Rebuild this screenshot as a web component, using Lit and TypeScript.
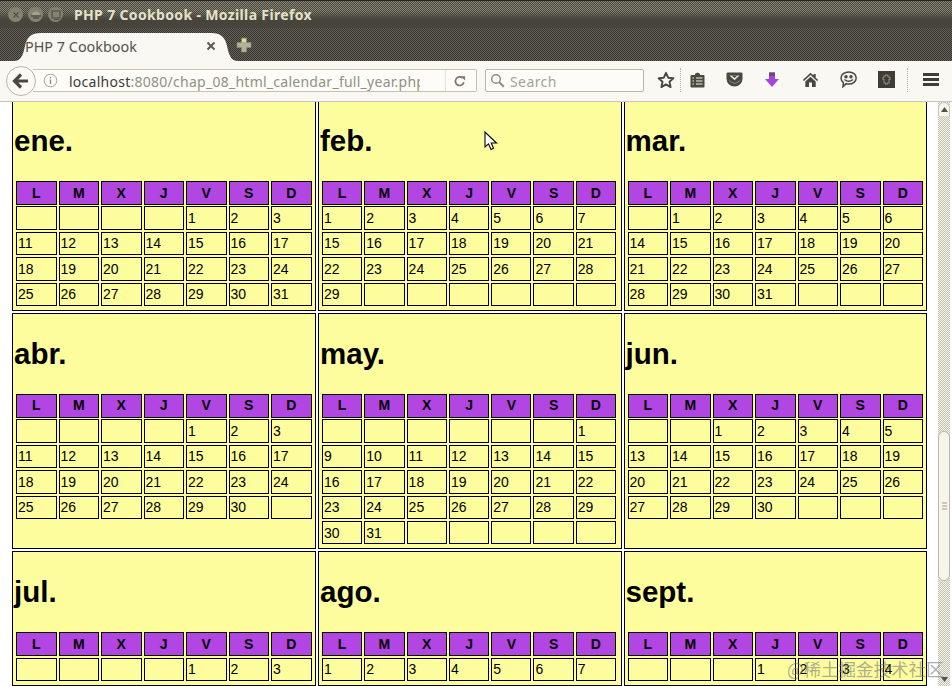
import { LitElement, html, css } from "lit";
import { customElement } from "lit/decorators.js";

const DAYS = ["L", "M", "X", "J", "V", "S", "D"];
const r = (a: number, b: number) => Array.from({ length: b - a + 1 }, (_, i) => String(a + i));
const blanks = (n: number) => Array.from({ length: n }, () => "");
const pad7 = (a: string[]) => a.concat(blanks((7 - (a.length % 7)) % 7));

const MONTHS: { name: string; cells: string[] }[] = [
  { name: "ene.", cells: [...blanks(4), ...r(1, 3), ...r(11, 31)] },
  { name: "feb.", cells: pad7([...r(1, 7), ...r(15, 29)]) },
  { name: "mar.", cells: pad7([...blanks(1), ...r(1, 6), ...r(14, 31)]) },
  { name: "abr.", cells: pad7([...blanks(4), ...r(1, 3), ...r(11, 30)]) },
  { name: "may.", cells: pad7([...blanks(6), "1", ...r(9, 31)]) },
  { name: "jun.", cells: pad7([...blanks(2), ...r(1, 5), ...r(13, 30)]) },
  { name: "jul.", cells: [...blanks(4), ...r(1, 3)] },
  { name: "ago.", cells: r(1, 7) },
  { name: "sept.", cells: [...blanks(3), ...r(1, 4)] },
];

const ink = "#4b483f";

@customElement("app-root")
export class AppRoot extends LitElement {
  static styles = css`
    :host {
      display: flex;
      flex-direction: column;
      position: relative;
      width: 952px;
      height: 686px;
      overflow: hidden;
      background: #fff;
      font-family: "Noto Sans", "Open Sans", sans-serif;
    }
    .titlebar {
      height: 28px;
      flex: none;
      display: flex;
      align-items: center;
      padding: 0 0 0 8px;
      box-sizing: border-box;
      border-top: 1px solid #26251f;
      background:
        linear-gradient(#47443c00 0, #47443c00 10px, #47443cdd 17px, #47443c 19px),
        repeating-conic-gradient(#8a8779 0 25%, #47443c 0 50%) 0 0 / 2px 2px;
    }
    .winbtn {
      width: 15px;
      height: 15px;
      border-radius: 50%;
      background: #85826f;
      margin-right: 5px;
      display: flex;
      align-items: center;
      justify-content: center;
    }
    .winbtn svg { display: block; }
    .wintitle {
      margin-left: 6px;
      font-size: 14px;
      font-weight: 700;
      color: #e4e2ca;
      letter-spacing: 0.35px;
      white-space: nowrap;
      line-height: 28px;
    }
    .tabstrip {
      height: 33px;
      flex: none;
      display: flex;
      align-items: flex-end;
      padding-left: 14px;
      box-sizing: border-box;
      background: repeating-conic-gradient(#66635a 0 25%, #35332d 0 50%) 0 0 / 2px 2px;
    }
    .tab {
      position: relative;
      width: 224px;
      height: 28px;
      display: flex;
      align-items: center;
      padding: 0 22px 2px 11px;
      box-sizing: border-box;
      color: #55524a;
      font-size: 14.4px;
      justify-content: space-between;
    }
    .tabshape {
      position: absolute;
      inset: 0;
      width: 100%;
      height: 100%;
    }
    .tab span, .tab .close { position: relative; }
    .plus { margin: 0 0 8px -2px; display: block; }
    .nav {
      height: 41px;
      flex: none;
      display: flex;
      align-items: center;
      box-sizing: border-box;
      padding: 0 0 1px 6px;
      background: #f9f8f3;
      border-bottom: 1px solid #c6c5bb;
    }
    .back {
      width: 30px;
      height: 30px;
      flex: none;
      margin-right: -3px;
      border-radius: 50%;
      border: 1px solid #b9b8a6;
      box-sizing: border-box;
      background: #fbfaf6;
      display: flex;
      align-items: center;
      justify-content: center;
      position: relative;
      z-index: 1;
    }
    .url {
      width: 444px;
      height: 23px;
      flex: none;
      box-sizing: border-box;
      border: 1px solid #c4c3b0;
      border-left: none;
      background: #fdfcf9;
      display: flex;
      align-items: center;
      padding-left: 10px;
      font-size: 14px;
      border-radius: 0 2px 2px 0;
      overflow: hidden;
    }
    .url .info { flex: none; margin-right: 11px; }
    .url .addr {
      width: 351px;
      flex: none;
      overflow: hidden;
      white-space: nowrap;
      color: #92917f;
      letter-spacing: 0.26px;
      padding-top: 1px;
    }
    .url .addr b { font-weight: 400; color: #3d3b34; }
    .url .sep { width: 1px; height: 21px; background: #e4e3d8; margin-left: 25px; flex: none; }
    .url .reload { margin-left: 8px; flex: none; }
    .search {
      width: 159px;
      height: 23px;
      flex: none;
      margin-left: 8px;
      box-sizing: border-box;
      border: 1px solid #b9b8a4;
      border-radius: 2px;
      background: #fdfcf9;
      display: flex;
      align-items: center;
      padding-left: 4px;
      gap: 5px;
      color: #a5a494;
      font-size: 14px;
      letter-spacing: 0.4px;
    }
    .search span { padding-top: 1px; }
    .tools { display: flex; align-items: center; margin-left: 10px; height: 30px; padding-bottom: 2px; }
    .slot { width: 38px; display: flex; justify-content: center; align-items: center; flex: none; }
    .slot svg { display: block; }
    .star { width: 24px; }
    .sepv { width: 1px; height: 24px; flex: none; margin: 0 0 0 2px; border-left: 1px dotted #b5b4a2; }
    .read { width: 30px; margin-right: 3px; }
    .menu { width: 28px; margin-left: 8px; }
    .pane { flex: 1; min-height: 0; display: flex; overflow: hidden; background: #fff; }
    .page { width: 938px; flex: none; padding-left: 12px; box-sizing: border-box; overflow: hidden; }
    .year {
      display: grid;
      grid-template-columns: 304px 303.5px 303.5px;
      gap: 2px;
      margin-top: -2px;
    }
    .month {
      border: 1px solid #000;
      background: #fdfd9e;
      box-sizing: border-box;
      padding-bottom: 4px;
    }
    .mname {
      margin: 23px 0 24px 1px;
      font: 700 29.5px/33px "Liberation Sans", Arial, sans-serif;
      color: #000;
    }
    .cal {
      display: grid;
      grid-template-columns: repeat(7, 40.5px);
      column-gap: 2px;
      row-gap: 2px;
      margin-left: 3px;
      grid-auto-rows: 23.4px;
      font: 14px "Liberation Sans", Arial, sans-serif;
      color: #000;
    }
    .cal.narrow { grid-template-columns: repeat(7, 40.3px); }
    .hd, .day {
      border: 1px solid #000;
      box-sizing: border-box;
      display: flex;
      align-items: center;
    }
    .hd {
      height: 24px;
      background: #b146e2;
      font-weight: 700;
      justify-content: center;
      padding-bottom: 1px;
    }
    .day { padding: 0 0 0 1px; }
    .scroll {
      width: 12px;
      flex: none;
      display: flex;
      flex-direction: column;
      background: repeating-conic-gradient(#c3c2b0 0 25%, #f4f3ea 0 50%) 0 0 / 2px 2px;
    }
    .sbtn {
      height: 14px;
      flex: none;
      display: flex;
      align-items: center;
      justify-content: center;
    }
    .sbtn.up { background: #f6f5ee; border: 1px solid #c9c8b8; border-bottom: none; border-radius: 6px 6px 0 0; box-sizing: border-box; }
    .strack { height: 315px; flex: none; }
    .thumb {
      height: 150px;
      flex: none;
      box-sizing: border-box;
      background: #f6f5ea;
      border: 1px solid #b9b8a6;
      border-radius: 6px;
      display: flex;
      align-items: center;
      justify-content: center;
    }
    .sfill { flex: 1; }
    .cursor { position: absolute; left: 484px; top: 131px; display: block; }
    .mark {
      position: absolute;
      left: 787px;
      top: 657px;
      font: 17.5px/24px "Noto Sans CJK SC", "Liberation Sans", sans-serif;
      color: rgba(120, 120, 120, 0.6);
      white-space: nowrap;
    }
  `;

  private month(m: { name: string; cells: string[] }, i: number) {
    return html`<section class="month">
      <h2 class="mname">${m.name}</h2>
      <div class="cal ${i % 3 === 1 ? "narrow" : ""}">
        ${DAYS.map((d) => html`<div class="hd">${d}</div>`)}
        ${m.cells.map((c) => html`<div class="day">${c}</div>`)}
      </div>
    </section>`;
  }

  render() {
    return html`
      <div class="titlebar">
        <div class="winbtn"><svg width="10" height="10" viewBox="0 0 10 10"><path d="M2.5 2.5l5 5M7.5 2.5l-5 5" stroke="#55524a" stroke-width="1.4"/></svg></div>
        <div class="winbtn"><svg width="12" height="10" viewBox="0 0 12 10"><path d="M1 6h10M3 8h6" stroke="#55524a" stroke-width="1.3"/><path d="M2 5a4 3.5 0 0 1 8 0z" fill="#a3a08e"/></svg></div>
        <div class="winbtn"><svg width="12" height="12" viewBox="0 0 12 12"><rect x="2" y="2" width="8" height="7" fill="none" stroke="#55524a" stroke-width="1.2"/><path d="M4 10.5h5" stroke="#55524a"/></svg></div>
        <div class="wintitle">PHP 7 Cookbook - Mozilla Firefox</div>
      </div>
      <div class="tabstrip">
        <div class="tab">
          <svg class="tabshape" viewBox="0 0 224 28" preserveAspectRatio="none"><path d="M0 28C7 28 9 22 11 13C13 4 17 0 27 0H197C207 0 211 4 213 13C215 22 217 28 224 28Z" fill="#f9f8f3"/></svg>
          <span>PHP 7 Cookbook</span>
          <svg class="close" width="10" height="10" viewBox="0 0 10 10"><path d="M1.5 1.5l7 7M8.5 1.5l-7 7" stroke="#5b584f" stroke-width="2"/></svg>
        </div>
        <svg class="plus" width="16" height="16" viewBox="0 0 16 16"><path d="M5.5 1h5v4.500H15v5h-4.500V15h-5v-4.500H1v-5h4.500z" fill="#b3b197" stroke="#8d8b76" stroke-width=".6"/><path d="M6 2h4v3H6z" fill="#dcdc9c"/></svg>
      </div>
      <div class="nav">
        <div class="back"><svg width="18" height="16" viewBox="0 0 18 16"><path d="M9 1.500L2.500 8L9 14.500M3 8H16" fill="none" stroke="${ink}" stroke-width="3.200"/></svg></div>
        <div class="url">
          <svg class="info" width="15" height="15" viewBox="0 0 15 15"><circle cx="7.500" cy="7.500" r="6.300" fill="none" stroke="#a5a494"/><path d="M7.500 4v1.400M7.500 6.500V11" stroke="#8b8a7a" stroke-width="1.300"/></svg>
          <div class="addr"><b>localhost</b>:8080/chap_08_html_calendar_full_year.php</div>
          <div class="sep"></div>
          <svg class="reload" width="12" height="12" viewBox="0 0 14 14"><path d="M11.500 8.500A5 5 0 1 1 10 3.500" fill="none" stroke="#7a786c" stroke-width="2"/><path d="M7.500 1.500h5.500V6.500z" fill="#7a786c"/></svg>
        </div>
        <div class="search">
          <svg width="15" height="15" viewBox="0 0 15 15"><circle cx="6" cy="6" r="4.300" fill="none" stroke="#8d8c7c" stroke-width="1.400"/><path d="M9.300 9.300l4.500 4.500" stroke="#8d8c7c" stroke-width="2"/></svg>
          <span>Search</span>
        </div>
        <div class="tools">
          <div class="slot star"><svg width="18" height="18" viewBox="0 0 18 18"><path d="M9 1.800l2.200 4.900 5.200.6-3.900 3.500 1.100 5.300L9 13.400l-4.600 2.700 1.100-5.300L1.600 7.300l5.200-.6z" fill="none" stroke="${ink}" stroke-width="1.900" stroke-linejoin="round"/></svg></div>
          <div class="sepv"></div>
          <div class="slot read"><svg width="15" height="16" viewBox="0 0 15 16"><path d="M1.500 3H5V1.800L7.500 .5 10 1.800V3h3.500a1 1 0 0 1 1 1v10.500a1 1 0 0 1-1 1h-12a1 1 0 0 1-1-1V4a1 1 0 0 1 1-1z" fill="${ink}"/><path d="M6 6h6.500M6 9h6.500M6 12h6.500M2.500 6H4M2.500 9H4M2.500 12H4" stroke="#f4f3ea" stroke-width="1.200"/></svg></div>
          <div class="slot"><svg width="17" height="15" viewBox="0 0 17 15"><path d="M1.800 .5h13.400A1.300 1.300 0 0 1 16.500 1.800V6.500A8 8 0 0 1 .5 6.500V1.800A1.300 1.300 0 0 1 1.800 .5z" fill="${ink}"/><path d="M3.500 3.500H13.500L8.500 8.200z" fill="#e9e8dc"/><path d="M5.500 3.500H11.500L8.500 6z" fill="${ink}"/><path d="M3 8.500Q8.500 14 14 8.500" fill="none" stroke="#8b897b" stroke-width="1"/></svg></div>
          <div class="slot"><svg width="16" height="16" viewBox="0 0 16 16"><path d="M5 .5h6v6.500h4L8 15 1 7h4z" fill="#a645dc"/><path d="M5 .5h6V4H5z" fill="#6b4a78"/></svg></div>
          <div class="slot"><svg width="17" height="16" viewBox="0 0 17 16"><path d="M8.500 .8L.8 8l1.200 1 6.500-6 6.500 6 1.200-1-2.500-2.300V2h-2.200v1.600z" fill="${ink}"/><path d="M3.300 9.500L8.500 4.700l5.200 4.800V15H10v-4.500H7V15H3.300z" fill="${ink}"/></svg></div>
          <div class="slot"><svg width="17" height="17" viewBox="0 0 17 17"><path d="M8.700 1C13 1 16.200 3.500 16.200 7S13 13 8.700 13c-.9 0-1.700-.1-2.500-.3L3 15.800l.4-4.100C1.800 10.600 1 9 1 7c0-3.500 3.400-6 7.700-6z" fill="#f4f3ea" stroke="${ink}" stroke-width="1.500"/><circle cx="6" cy="5.800" r="1.700" fill="${ink}"/><circle cx="11" cy="5.800" r="1.700" fill="${ink}"/><path d="M4.500 8.500Q8.500 12 13 8.500" fill="none" stroke="${ink}" stroke-width="1.400"/></svg></div>
          <div class="slot"><svg width="17" height="17" viewBox="0 0 17 17"><rect width="17" height="17" fill="#3f3d36"/><path d="M6 5h1.500V4h2v1H11v1.500h1v2h-1V12H9.500v1h-2v-1H6V8.500H5v-2h1z" fill="none" stroke="#8d8b7c" stroke-width="1.100"/></svg></div>
          <div class="sepv"></div>
          <div class="slot menu"><svg width="16" height="13" viewBox="0 0 16 13"><path d="M0 0h16v3H0zM0 5h16v3H0zM0 10h16v3H0z" fill="#3f3d36"/></svg></div>
        </div>
      </div>
      <div class="pane">
        <div class="page">
          <div class="year">${MONTHS.map((m, i) => this.month(m, i))}</div>
        </div>
        <div class="scroll">
          <div class="sbtn up"><svg width="7" height="5" viewBox="0 0 7 5"><path d="M3.500 0L7 5H0z" fill="#55534a"/></svg></div>
          <div class="strack"></div>
          <div class="thumb"><svg width="5" height="8" viewBox="0 0 5 8"><path d="M0 1h5M0 4h5M0 7h5" stroke="#a09f8e"/></svg></div>
          <div class="sfill"></div>
          <div class="sbtn"><svg width="7" height="5" viewBox="0 0 7 5"><path d="M3.500 5L7 0H0z" fill="#55534a"/></svg></div>
        </div>
      </div>
      <svg class="cursor" width="14" height="20" viewBox="0 0 14 20"><path d="M1 1V16L4.500 12.800 7 18.500 9.500 17.300 7.200 12H12.500z" fill="#fff" stroke="#000" stroke-width="1.100" stroke-linejoin="miter"/></svg>
      <div class="mark">@稀土掘金技术社区</div>
    `;
  }
}
